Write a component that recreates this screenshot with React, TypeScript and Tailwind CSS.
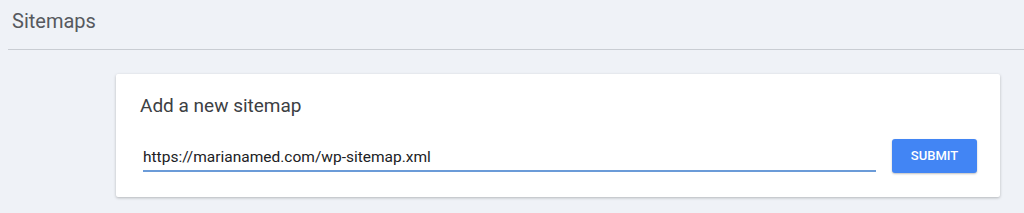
export default function App() {
  return (
    <div className="w-[1024px] h-[213px] bg-[#eff2f7] overflow-hidden font-['Roboto',_'Liberation_Sans',_sans-serif]">
      {/* Page header */}
      <div className="pl-2">
        <div className="h-[50px] border-b border-[#c9cdd3] flex items-center pl-1">
          <h1 className="text-[20px] text-[#56595e] leading-none pb-[7px]">Sitemaps</h1>
        </div>
      </div>

      {/* Card */}
      <div className="pt-[24px] pl-[116px] pr-[24px]">
        <div className="bg-white rounded-[2px] shadow-[0_1px_3px_rgba(0,0,0,0.25)] h-[123px] pl-6 pr-[23px] pt-[22px]">
          <p className="text-[19px] text-[#3c4043] leading-none">Add a new sitemap</p>
          <div className="flex items-start gap-4 mt-[24px]">
            <div className="flex-1 pl-[3px]">
              <div className="h-[33px] flex items-end border-b-2 border-[#6b9bd8] pb-[5px]">
                <span className="text-[15.5px] text-[#202124] leading-none">https://marianamed.com/wp-sitemap.xml</span>
              </div>
            </div>
            <button className="w-[85px] h-[34px] bg-[#4285f4] rounded-[3px] text-white text-[13px] font-medium shadow-[0_1px_2px_rgba(0,0,0,0.25)]">
              SUBMIT
            </button>
          </div>
        </div>
      </div>
    </div>
  );
}
